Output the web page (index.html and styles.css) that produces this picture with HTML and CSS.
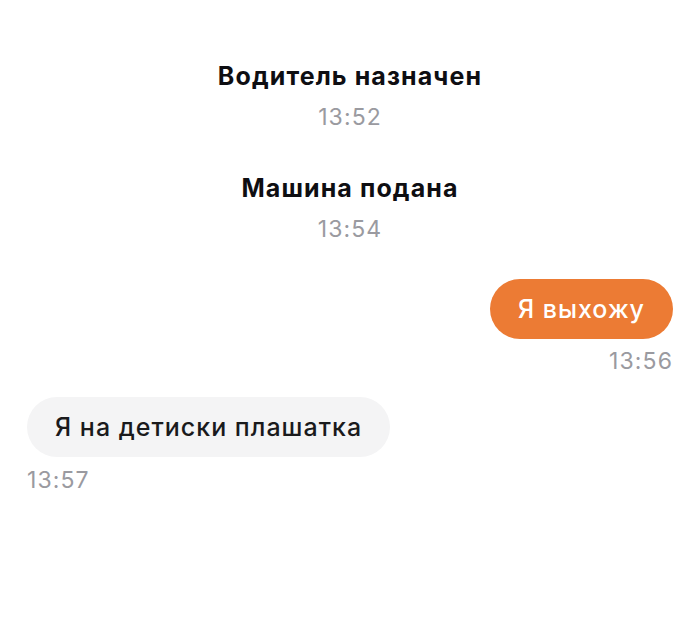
FILE: index.html
```html
<!DOCTYPE html>
<html lang="ru">
<head>
    <meta charset="UTF-8">
    <meta name="viewport" content="width=device-width, initial-scale=1.0">
    <title>Чат</title>
    <link rel="stylesheet" href="styles.css">
</head>
<body>
    <div class="chat">
        <div class="event">
            <p class="event-title">Водитель назначен</p>
            <p class="time">13:52</p>
        </div>
        <div class="event">
            <p class="event-title">Машина подана</p>
            <p class="time">13:54</p>
        </div>
        <div class="msg msg-out">
            <div class="bubble">Я выхожу</div>
            <p class="time">13:56</p>
        </div>
        <div class="msg msg-in">
            <div class="bubble">Я на детиски плашатка</div>
            <p class="time">13:57</p>
        </div>
    </div>
</body>
</html>
```

FILE: styles.css
```css
*{margin:0; padding:0; box-sizing:border-box}
body{background:#fff; font-family:Inter, "Noto Sans", sans-serif; color:#1c1c1e}
.chat{display:flex; flex-direction:column; padding:59px 27px 0}
.event{display:flex; flex-direction:column; align-items:center; margin-bottom:41px}
.event-title{font-size:25px; font-weight:700; line-height:34px; letter-spacing:1.1px; color:#0e0e12}
.time{font-size:23px; line-height:26px; letter-spacing:1.1px; color:#9a9aa0; margin-top:11px}
.msg{display:flex; flex-direction:column; margin-bottom:23px}
.msg-out{align-items:flex-end; margin-top:-4px}
.msg-in{align-items:flex-start}
.msg .time{margin-top:9px}
.msg-in .time{margin-top:10px}
.bubble{height:60px; border-radius:30px; padding:0 28px; font-size:25px; font-weight:500; line-height:60px; letter-spacing:1px}
.msg-out .bubble{background:#ec7b34; color:#fff}
.msg-in .bubble{background:#f4f4f5; color:#1a1a1c}
```
